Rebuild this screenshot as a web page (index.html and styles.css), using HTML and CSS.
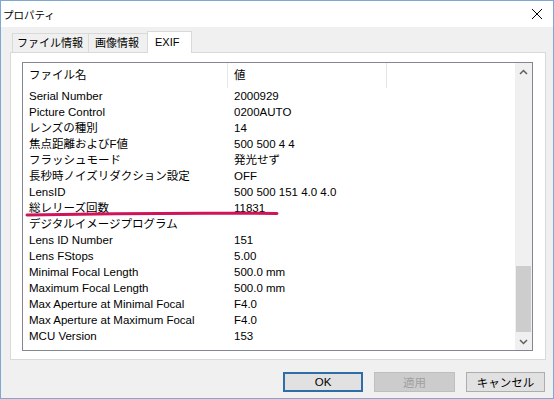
FILE: index.html
```html
<!DOCTYPE html>
<html lang="ja">
<head>
    <meta charset="UTF-8">
    <title>プロパティ</title>
    <link rel="stylesheet" href="styles.css">
</head>
<body>
    <div class="window">
        <div class="titlebar">
            <span class="title">プロパティ</span>
            <span class="close-btn">
                <svg width="12" height="12" viewBox="0 0 12 12"><path d="M1 1 L11 11 M11 1 L1 11" stroke="#000" stroke-width="1" fill="none"/></svg>
            </span>
        </div>

        <div class="dialog-body">
            <div class="tabs">
                <div class="tab tab-file">ファイル情報</div>
                <div class="tab tab-image">画像情報</div>
                <div class="tab active">EXIF</div>
            </div>

            <div class="panel">
                <div class="listbox">
                    <div class="list-view">
                        <div class="list-header">
                            <div class="col-name">ファイル名</div>
                            <div class="col-value">値</div>
                            <div class="col-rest"></div>
                        </div>
                        <div class="row"><span class="col-name">Serial Number</span><span class="col-value">2000929</span></div>
                        <div class="row"><span class="col-name">Picture Control</span><span class="col-value">0200AUTO</span></div>
                        <div class="row"><span class="col-name">レンズの種別</span><span class="col-value">14</span></div>
                        <div class="row"><span class="col-name">焦点距離およびF値</span><span class="col-value">500 500 4 4</span></div>
                        <div class="row"><span class="col-name">フラッシュモード</span><span class="col-value">発光せず</span></div>
                        <div class="row"><span class="col-name">長秒時ノイズリダクション設定</span><span class="col-value">OFF</span></div>
                        <div class="row"><span class="col-name">LensID</span><span class="col-value">500 500 151 4.0 4.0</span></div>
                        <div class="row"><span class="col-name">総レリーズ回数</span><span class="col-value">11831</span></div>
                        <div class="row"><span class="col-name">デジタルイメージプログラム</span><span class="col-value"></span></div>
                        <div class="row"><span class="col-name">Lens ID Number</span><span class="col-value">151</span></div>
                        <div class="row"><span class="col-name">Lens FStops</span><span class="col-value">5.00</span></div>
                        <div class="row"><span class="col-name">Minimal Focal Length</span><span class="col-value">500.0 mm</span></div>
                        <div class="row"><span class="col-name">Maximum Focal Length</span><span class="col-value">500.0 mm</span></div>
                        <div class="row"><span class="col-name">Max Aperture at Minimal Focal</span><span class="col-value">F4.0</span></div>
                        <div class="row"><span class="col-name">Max Aperture at Maximum Focal</span><span class="col-value">F4.0</span></div>
                        <div class="row"><span class="col-name">MCU Version</span><span class="col-value">153</span></div>
                    </div>
                    <div class="scrollbar">
                        <div class="arrow">
                            <svg width="9" height="6" viewBox="0 0 9 6"><path d="M1 5 L4.5 1.5 L8 5" stroke="#606060" stroke-width="1.5" fill="none"/></svg>
                        </div>
                        <div class="track">
                            <div class="thumb"></div>
                        </div>
                        <div class="arrow">
                            <svg width="9" height="6" viewBox="0 0 9 6"><path d="M1 1 L4.5 4.5 L8 1" stroke="#606060" stroke-width="1.5" fill="none"/></svg>
                        </div>
                    </div>
                </div>
            </div>

            <div class="buttons">
                <button class="btn default">OK</button>
                <button class="btn" disabled>適用</button>
                <button class="btn">キャンセル</button>
            </div>
        </div>

        <!-- red marker stroke drawn over the list -->
        <svg class="marker" width="554" height="399" viewBox="0 0 554 399">
            <path d="M27 215 Q150 212.5 277 213.5" stroke="#d0145a" stroke-width="3" stroke-linecap="round" fill="none"/>
        </svg>
    </div>
</body>
</html>
```

FILE: styles.css
```css
/* Global */
* {
    margin: 0;
    padding: 0;
    box-sizing: border-box;
}

body {
    width: 554px;
    height: 399px;
    font-family: 'Liberation Sans', 'Noto Sans CJK JP', sans-serif;
    font-size: 12px;
    color: #000;
    background-color: #fff;
}

/* Window frame */
.window {
    position: relative;
    width: 554px;
    height: 399px;
    border: 1px solid #7ea8d2;
    display: flex;
    flex-direction: column;
}

.titlebar {
    height: 26px;
    background-color: #fff;
    display: flex;
    align-items: center;
    justify-content: space-between;
    padding: 0 10px 0 2px;
}

.title {
    font-size: 10.5px;
}

.close-btn {
    display: flex;
    align-items: center;
}

.dialog-body {
    flex: 1;
    background-color: #f0f0f0;
    padding: 4px 7px 0 9px;
    display: flex;
    flex-direction: column;
}

/* Tabs */
.tabs {
    display: flex;
    align-items: flex-end;
    height: 21px;
    padding-left: 2px;
    position: relative;
    z-index: 1;
}

.tab {
    height: 19px;
    border: 1px solid #d9d9d9;
    border-bottom: none;
    margin-right: -1px;
    background-color: #f0f0f0;
    font-size: 11px;
    line-height: 18px;
}

.tab-file {
    width: 77px;
    padding-left: 4px;
}

.tab-image {
    width: 60px;
    padding-left: 6px;
}

.tab.active {
    width: 45px;
    height: 22px;
    margin-bottom: -1px;
    background-color: #fff;
    padding-left: 7px;
    line-height: 20px;
}

/* Tab page */
.panel {
    height: 308px;
    background-color: #fff;
    border: 1px solid #d9d9d9;
    padding: 9px 12px 8px 11px;
}

.listbox {
    height: 100%;
    border: 1px solid #828790;
    display: flex;
    overflow: hidden;
}

.list-view {
    flex: 1;
    overflow: hidden;
}

.list-header {
    height: 25px;
    display: flex;
    align-items: center;
}

.list-header > div {
    height: 25px;
    line-height: 25px;
    border-right: 1px solid #e5e5e5;
    font-size: 11.5px;
}

.list-header .col-rest {
    border-right: none;
}

.col-name {
    width: 205px;
    padding-left: 6px;
    white-space: nowrap;
    overflow: hidden;
}

.col-value {
    width: 159px;
    padding-left: 6px;
    white-space: nowrap;
}

.row {
    height: 16px;
    line-height: 16px;
    display: flex;
    font-size: 11.5px;
}

/* Scrollbar */
.scrollbar {
    width: 17px;
    background-color: #f0f0f0;
    display: flex;
    flex-direction: column;
}

.arrow {
    height: 17px;
    display: flex;
    align-items: center;
    justify-content: center;
}

.track {
    flex: 1;
    display: flex;
    flex-direction: column;
    justify-content: flex-end;
    padding: 0 1px 1px;
}

.thumb {
    height: 66px;
    background-color: #cdcdcd;
}

/* Buttons */
.buttons {
    display: flex;
    justify-content: flex-end;
    gap: 11px;
    margin-top: 12px;
    padding-right: 1px;
}

.btn {
    width: 79px;
    height: 20px;
    font-family: 'Liberation Sans', 'Noto Sans CJK JP', sans-serif;
    font-size: 11.5px;
    background-color: #e1e1e1;
    border: 1px solid #adadad;
    color: #000;
}

.btn.default {
    width: 80px;
    border: 2px solid #2e6ea8;
}

.btn:disabled {
    width: 81px;
    background-color: #cccccc;
    border-color: #bfbfbf;
    color: #a0a0a0;
}

/* Annotation overlay */
.marker {
    position: absolute;
    top: -1px;
    left: -1px;
    pointer-events: none;
}
```
